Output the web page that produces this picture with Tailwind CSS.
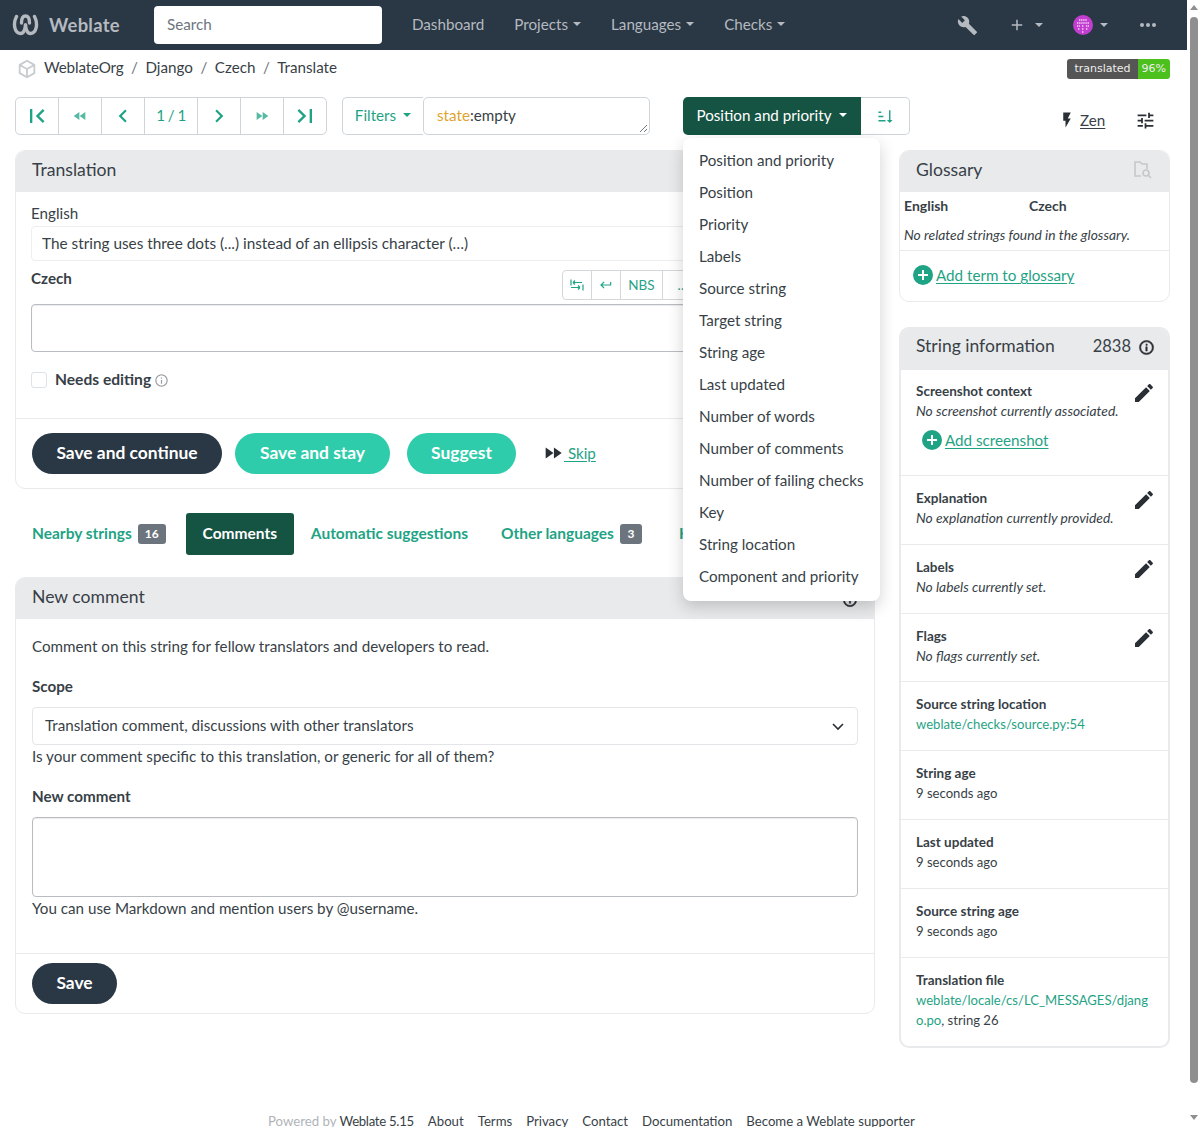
<!DOCTYPE html>
<html lang="en">
<head>
  <meta charset="UTF-8" />
  <title>Translate - Weblate</title>
  <script src="https://cdn.jsdelivr.net/npm/@tailwindcss/browser@4"></script>
</head>
<body class="font-['Lato',sans-serif] text-[15.2px] text-[#383f47] bg-white">
<div class="flex h-[1127px] overflow-hidden">
  <div class="relative w-[1187px] shrink-0">

    <!-- navbar -->
    <nav class="h-[50px] bg-[#2a3744] flex items-center text-[#b5bac0]">
      <svg class="ml-[12px] w-[27px] h-[22px]" viewBox="0 0 27 22" fill="none" stroke="#b5bac0" stroke-linecap="round">
        <path d="M4.5 2.5C1 9 2 19 8.5 19.5C11.5 19.5 13 16 13.5 11" stroke-width="3.4"/>
        <path d="M22.5 2.5C26 9 25 19 18.5 19.5C15.5 19.5 14 16 13.5 11" stroke-width="3.4"/>
        <path d="M9.5 9C9.5 4 11 2 13.5 2C16 2 17.5 4 17.5 9" stroke-width="3.4"/>
      </svg>
      <span class="ml-[10px] mt-[1px] text-[18.4px] font-bold tracking-[.3px]">Weblate</span>
      <div class="ml-[34px] w-[228px] h-[38px] bg-white rounded flex items-center px-[13px] pb-[2px] text-[#6c757d]">Search</div>
      <div class="ml-[30px] pb-[2px] flex items-center gap-[30px]">
        <span>Dashboard</span>
        <span class="flex items-center gap-[5px]">Projects<span class="w-0 h-0 border-x-[4px] border-x-transparent border-t-[4px] border-t-[#b5bac0]"></span></span>
        <span class="flex items-center gap-[5px]">Languages<span class="w-0 h-0 border-x-[4px] border-x-transparent border-t-[4px] border-t-[#b5bac0]"></span></span>
        <span class="flex items-center gap-[5px]">Checks<span class="w-0 h-0 border-x-[4px] border-x-transparent border-t-[4px] border-t-[#b5bac0]"></span></span>
      </div>
      <div class="ml-auto flex items-center mr-[27px]">
        <svg class="w-[21px] h-[21px]" viewBox="0 0 24 24" fill="#b5bac0"><path d="M22.7,19L13.6,9.9C14.5,7.6 14,4.9 12.1,3C10.1,1 7.1,0.6 4.7,1.7L9,6L6,9L1.6,4.7C0.4,7.1 0.9,10.1 2.9,12.1C4.8,14 7.5,14.5 9.8,13.6L18.9,22.7C19.3,23.1 19.9,23.1 20.3,22.7L22.6,20.4C23.1,20 23.1,19.3 22.7,19Z"/></svg>
        <svg class="ml-[30px] w-[18px] h-[18px]" viewBox="0 0 24 24" fill="#b5bac0"><path d="M19,13H13V19H11V13H5V11H11V5H13V11H19V13Z"/></svg>
        <span class="ml-[9px] w-0 h-0 border-x-[4px] border-x-transparent border-t-[4px] border-t-[#b5bac0]"></span>
        <svg class="ml-[30px] w-[20px] h-[20px]" viewBox="0 0 20 20">
          <circle cx="10" cy="10" r="10" fill="#c23ed0"/>
          <path d="M6 5h8M4 8h12M4 11h3M9 11h2M13 11h3M5 14h2M9 14h2M13 14h2M9 17h2" stroke="#f3d3f6" stroke-width="1.4" stroke-dasharray="1.4 .7"/>
        </svg>
        <span class="ml-[7px] w-0 h-0 border-x-[4px] border-x-transparent border-t-[4px] border-t-[#b5bac0]"></span>
        <svg class="ml-[28px] w-[24px] h-[24px]" viewBox="0 0 24 24" fill="#b5bac0"><path d="M16,12A2,2 0 0,1 18,10A2,2 0 0,1 20,12A2,2 0 0,1 18,14A2,2 0 0,1 16,12M10,12A2,2 0 0,1 12,10A2,2 0 0,1 14,12A2,2 0 0,1 12,14A2,2 0 0,1 10,12M4,12A2,2 0 0,1 6,10A2,2 0 0,1 8,12A2,2 0 0,1 6,14A2,2 0 0,1 4,12Z"/></svg>
      </div>
    </nav>

    <!-- breadcrumb -->
    <div class="h-[47px] pl-[16px] pr-[17px] flex items-start">
      <div class="flex items-center h-[35px] text-[15.2px]">
        <svg class="w-[22px] h-[22px] mt-[3px]" viewBox="0 0 24 24" fill="#c9cccf"><path d="M21,16.5C21,16.88 20.79,17.21 20.47,17.38L12.57,21.82C12.41,21.94 12.21,22 12,22C11.79,22 11.59,21.94 11.43,21.82L3.53,17.38C3.21,17.21 3,16.88 3,16.5V7.5C3,7.12 3.21,6.79 3.53,6.62L11.43,2.18C11.59,2.06 11.79,2 12,2C12.21,2 12.41,2.06 12.57,2.18L20.47,6.62C20.79,6.79 21,7.12 21,7.5V16.5M12,4.15L6.04,7.5L12,10.85L17.96,7.5L12,4.15M5,15.91L11,19.29V12.58L5,9.21V15.91M19,15.91V9.21L13,12.58V19.29L19,15.91Z"/></svg>
        <span class="ml-[6px] tracking-[-.15px]">WeblateOrg</span>
        <span class="mx-[7.5px] text-[#6c757d]">/</span><span>Django</span>
        <span class="mx-[7.5px] text-[#6c757d]">/</span><span>Czech</span>
        <span class="mx-[7.5px] text-[#6c757d]">/</span><span>Translate</span>
      </div>
      <div class="ml-auto mt-[9px] flex h-[20px] rounded-[3px] overflow-hidden text-[11px] font-['DejaVu_Sans',sans-serif] leading-[20px] text-[#eee]">
        <span class="bg-[#555] pl-[7px] pr-[7px]">translated</span>
        <span class="bg-[#4cc01c] px-[4px]">96%</span>
      </div>
    </div>

    <!-- toolbar -->
    <div class="pl-[15px] flex h-[38px] items-stretch text-[#1fa385]">
      <div class="flex w-[312px] border border-[#ced4da] rounded-[5px]">
        <span class="w-[42px] flex items-center justify-center"><svg class="w-[28px] h-[28px]" viewBox="0 0 24 24" fill="currentColor"><path d="M18.41,16.59L13.82,12L18.41,7.41L17,6L11,12L17,18L18.41,16.59M6,6H8V18H6V6Z"/></svg></span>
        <span class="w-[43px] border-l border-[#ced4da] flex items-center justify-center"><svg class="w-[16px] h-[16px] opacity-75" viewBox="0 0 24 24" fill="currentColor"><path d="M11.5,12L20,18V6M11,18V6L2.5,12L11,18Z"/></svg></span>
        <span class="w-[43px] border-l border-[#ced4da] flex items-center justify-center"><svg class="w-[26px] h-[26px]" viewBox="0 0 24 24" fill="currentColor"><path d="M15.41,16.58L10.83,12L15.41,7.41L14,6L8,12L14,18L15.41,16.58Z"/></svg></span>
        <span class="w-[53px] border-l border-[#ced4da] flex items-center justify-center pb-[2px] tracking-[-.6px]">1 / 1</span>
        <span class="w-[43px] border-l border-[#ced4da] flex items-center justify-center"><svg class="w-[26px] h-[26px]" viewBox="0 0 24 24" fill="currentColor"><path d="M8.59,16.58L13.17,12L8.59,7.41L10,6L16,12L10,18L8.59,16.58Z"/></svg></span>
        <span class="w-[43px] border-l border-[#ced4da] flex items-center justify-center"><svg class="w-[16px] h-[16px] opacity-75" viewBox="0 0 24 24" fill="currentColor"><path d="M13,6V18L21.5,12M4,18L12.5,12L4,6V18Z"/></svg></span>
        <span class="flex-1 border-l border-[#ced4da] flex items-center justify-center"><svg class="w-[28px] h-[28px]" viewBox="0 0 24 24" fill="currentColor"><path d="M5.59,7.41L10.18,12L5.59,16.59L7,18L13,12L7,6L5.59,7.41M16,6H18V18H16V6Z"/></svg></span>
      </div>
      <div class="ml-[15px] w-[81px] border border-r-0 border-[#ced4da] rounded-l-[5px] flex items-center justify-center gap-[7px] pb-[2px]">Filters<span class="w-0 h-0 border-x-[4px] border-x-transparent border-t-[4px] border-t-[#1fa385]"></span></div>
      <div class="relative w-[227px] border border-[#ced4da] rounded-[5px] px-[13px] pt-[6px] text-[#383f47]"><span class="text-[#e0a32e]">state</span>:empty
        <svg class="absolute right-[1px] bottom-[1px] w-[9px] h-[9px]" viewBox="0 0 9 9" stroke="#777" fill="none"><path d="M1 8L8 1M5 8L8 5"/></svg>
      </div>
      <div class="ml-[33px] w-[178px] bg-[#155443] rounded-l-[5px] text-white flex items-center justify-center gap-[7px] pb-[2px] pr-[1px]">Position and priority<span class="w-0 h-0 border-x-[4px] border-x-transparent border-t-[4px] border-t-white"></span></div>
      <div class="w-[49px] border border-l-0 border-[#ced4da] rounded-r-[5px] flex items-center justify-center"><svg class="w-[17px] h-[17px]" viewBox="0 0 24 24" fill="currentColor"><path d="M19 17H22L18 21L14 17H17V3H19M2 17H12V19H2M6 5V7H2V5M2 11H9V13H2V11Z"/></svg></div>
      <div class="ml-[148px] flex items-center text-[#383f47] mt-[8px]">
        <svg class="w-[18px] h-[18px]" viewBox="0 0 24 24" fill="#2a2f35"><path d="M7,2V13H10V22L17,10H13L17,2H7Z"/></svg>
        <span class="ml-[4px] underline underline-offset-2">Zen</span>
      </div>
      <svg class="ml-[30px] mt-[13px] w-[21px] h-[21px]" viewBox="0 0 24 24" fill="#2a2f35"><path d="M3,17V19H9V17H3M3,5V7H13V5H3M13,21V19H21V17H13V15H11V21H13M7,9V11H3V13H7V15H9V9H7M21,13V11H11V13H21M15,9H17V7H21V5H17V3H15V9Z"/></svg>
    </div>

    <div class="pl-[15px] pt-[15px] flex gap-[24px] items-start">
      <!-- left column -->
      <div class="w-[860px] shrink-0">
        <section class="border border-[#e9eaec] rounded-[10px] overflow-hidden">
          <div class="h-[41px] bg-[#e9eaec] px-[16px] flex items-center text-[17.6px]"><span class="pb-[3px]">Translation</span></div>
          <div class="pl-[15px] pr-[16px] pt-[11px] h-[226px]">
            <div class="leading-[20px]">English</div>
            <div class="mt-[3px] h-[35px] border border-[#eceef0] rounded-[4px] px-[10px] flex items-center text-[15.35px]">The string uses three dots (...) instead of an ellipsis character (…)</div>
            <div class="flex justify-between h-[43px]">
              <b class="mt-[7px] font-bold leading-[20px]">Czech</b>
              <div class="mt-[9px] h-[30px] mr-[155px] flex border border-[#d5d8db] rounded-[4px] text-[#1fa385] text-[13.5px]">
                <span class="w-[28px] flex items-center justify-center"><svg class="w-[14px] h-[14px]" viewBox="0 0 14 14" fill="none" stroke="currentColor" stroke-width="1.2"><path d="M1 1.5v6M13 6.5v6M3 4.5h9M3 4.5l2-2M3 4.5l2 2M1 9.5h9M10 9.5l-2-2M10 9.5l-2 2"/></svg></span>
                <span class="w-[29px] border-l border-[#d5d8db] flex items-center justify-center"><svg class="w-[14px] h-[14px]" viewBox="0 0 24 24" fill="currentColor"><path d="M19,7V11H5.83L9.41,7.41L8,6L2,12L8,18L9.41,16.58L5.83,13H21V7H19Z"/></svg></span>
                <span class="w-[42px] border-l border-[#d5d8db] flex items-center justify-center">NBS</span>
                <span class="w-[40px] border-l border-[#d5d8db] flex items-center justify-center">…</span>
              </div>
            </div>
            <div class="h-[48px] border border-[#b9bdc2] rounded-[4px] shadow-[inset_0_1px_1px_rgba(0,0,0,.08)]"></div>
            <div class="mt-[18px] flex items-center h-[20px]">
              <span class="w-[16px] h-[16px] border border-[#dee2e6] rounded-[3px]"></span>
              <b class="ml-[8px] font-bold text-[15.6px]">Needs editing</b>
              <svg class="ml-[3px] w-[15px] h-[15px]" viewBox="0 0 24 24" fill="#9aa0a6"><path d="M11,9H13V7H11M12,20C7.59,20 4,16.41 4,12C4,7.59 7.59,4 12,4C16.41,4 20,7.59 20,12C20,16.41 16.41,20 12,20M12,2A10,10 0 0,0 2,12A10,10 0 0,0 12,22A10,10 0 0,0 22,12A10,10 0 0,0 12,2M11,17H13V11H11V17Z"/></svg>
            </div>
          </div>
          <div class="border-t border-[#e9eaec] h-[70px] pl-[16px] pt-[14px] flex items-start text-white text-[17.4px] font-bold">
            <span class="w-[190px] h-[41px] bg-[#2a3744] rounded-full flex items-center justify-center">Save and continue</span>
            <span class="ml-[13px] w-[155px] h-[41px] bg-[#2eccaa] rounded-full flex items-center justify-center">Save and stay</span>
            <span class="ml-[17px] w-[109px] h-[41px] bg-[#2eccaa] rounded-full flex items-center justify-center">Suggest</span>
            <span class="ml-[26px] h-[41px] pb-[1px] flex items-center text-[#1fa385] text-[15.2px] font-normal">
              <svg class="w-[22px] h-[22px]" viewBox="0 0 24 24" fill="#2a2f35"><path d="M13,6V18L21.5,12M4,18L12.5,12L4,6V18Z"/></svg>
              <span class="underline underline-offset-2 whitespace-pre"> Skip</span>
            </span>
          </div>
        </section>

        <div class="mt-[24px] h-[42px] flex items-center pl-[17px] text-[#1fa385] font-bold text-[15.5px] whitespace-nowrap overflow-hidden">
          <span>Nearby strings</span>
          <span class="ml-[6px] w-[28px] h-[20px] bg-[#6c757d] rounded-[3px] text-white text-[12px] font-bold flex items-center justify-center">16</span>
          <span class="ml-[20px] w-[108px] h-[42px] bg-[#155443] rounded-[3px] text-white flex items-center justify-center">Comments</span>
          <span class="ml-[17px]">Automatic suggestions</span>
          <span class="ml-[33px]">Other languages</span>
          <span class="ml-[6px] w-[22px] h-[20px] bg-[#6c757d] rounded-[3px] text-white text-[12px] font-bold flex items-center justify-center">3</span>
          <span class="ml-[37px]">History</span>
        </div>

        <section class="mt-[22px] border border-[#e9eaec] rounded-[10px] overflow-hidden">
          <div class="h-[41px] bg-[#e9eaec] px-[16px] flex items-center justify-between text-[17.6px]"><span class="pb-[2px]">New comment</span>
            <svg class="w-[16px] h-[16px] mt-[2px]" viewBox="0 0 24 24" fill="#2a2f35" stroke="#2a2f35" stroke-width=".8"><path d="M11,9H13V7H11M12,20C7.59,20 4,16.41 4,12C4,7.59 7.59,4 12,4C16.41,4 20,7.59 20,12C20,16.41 16.41,20 12,20M12,2A10,10 0 0,0 2,12A10,10 0 0,0 12,22A10,10 0 0,0 22,12A10,10 0 0,0 12,2M11,17H13V11H11V17Z"/></svg>
          </div>
          <div class="px-[16px] pt-[17px] h-[334px] leading-[20px]">
            <p>Comment on this string for fellow translators and developers to read.</p>
            <b class="block mt-[20px] font-bold">Scope</b>
            <div class="mt-[11px] h-[38px] border border-[#e3e5e8] rounded-[4px] px-[12px] pb-[2px] flex items-center justify-between">Translation comment, discussions with other translators
              <svg class="w-[14px] h-[14px] mt-[2px]" viewBox="0 0 14 14" fill="none" stroke="#2a2f35" stroke-width="1.6"><path d="M2 5l5 5 5-5"/></svg>
            </div>
            <p class="mt-[1px]">Is your comment specific to this translation, or generic for all of them?</p>
            <b class="block mt-[20px] font-bold">New comment</b>
            <div class="mt-[11px] h-[80px] border border-[#b9bdc2] rounded-[4px] shadow-[inset_0_1px_1px_rgba(0,0,0,.08)]"></div>
            <p class="mt-[1px]">You can use Markdown and mention users by @username.</p>
          </div>
          <div class="border-t border-[#e9eaec] h-[60px] pl-[16px] pt-[9px]">
            <span class="w-[85px] h-[41px] bg-[#2a3744] rounded-full text-white text-[17.4px] font-bold flex items-center justify-center">Save</span>
          </div>
        </section>
      </div>

      <!-- right column -->
      <div class="w-[271px] shrink-0">
        <section class="border border-[#e9eaec] rounded-[10px] overflow-hidden h-[152px]">
          <div class="h-[41px] bg-[#e9eaec] px-[16px] flex items-center justify-between text-[17.6px]"><span class="pb-[3px]">Glossary</span>
            <svg class="w-[20px] h-[20px] -mt-[3px]" viewBox="0 0 20 20" fill="none" stroke="#c5c8cc" stroke-width="1.6"><path d="M8 16H2V2h5l2 2h5v5"/><circle cx="13" cy="13" r="3"/><path d="M15 15l3 3"/></svg>
          </div>
          <div class="flex px-[4px] pt-[4px] text-[14px] font-bold leading-[20px]"><span class="w-[125px]">English</span><span>Czech</span></div>
          <div class="px-[4px] mt-[9px] pb-[5px] border-b border-[#e9eaec] italic text-[13.85px] leading-[20px]">No related strings found in the glossary.</div>
          <div class="pl-[13px] pt-[13px] flex items-center text-[#1fa385]">
            <svg class="w-[20px] h-[20px] mr-[3px]" viewBox="2 2 20 20" fill="#1fa385"><path d="M17,13H13V17H11V13H7V11H11V7H13V11H17M12,2A10,10 0 0,0 2,12A10,10 0 0,0 12,22A10,10 0 0,0 22,12A10,10 0 0,0 12,2Z"/></svg>
            <span class="underline underline-offset-2">Add term to glossary</span>
          </div>
        </section>

        <section class="mt-[25px] border-2 border-[#e9eaec] rounded-[10px] overflow-hidden h-[721px] text-[13.1px] leading-[20px]">
          <div class="h-[41px] bg-[#e9eaec] pl-[15px] pr-[13px] flex items-center text-[17.5px]"><span class="pb-[7px]">String information</span>
            <span class="ml-auto text-[16.5px] pb-[7px]">2838</span>
            <svg class="ml-[7px] mb-[4px] w-[17px] h-[17px]" viewBox="0 0 24 24" fill="#2a2f35" stroke="#2a2f35" stroke-width=".8"><path d="M11,9H13V7H11M12,20C7.59,20 4,16.41 4,12C4,7.59 7.59,4 12,4C16.41,4 20,7.59 20,12C20,16.41 16.41,20 12,20M12,2A10,10 0 0,0 2,12A10,10 0 0,0 12,22A10,10 0 0,0 22,12A10,10 0 0,0 12,2M11,17H13V11H11V17Z"/></svg>
          </div>
          <div class="relative h-[106px] border-b border-[#e9eaec] pl-[15px] pt-[11px]">
            <b class="block font-bold text-[13.5px]">Screenshot context</b>
            <i class="text-[13.8px]">No screenshot currently associated.</i>
            <div class="ml-[6px] mt-[9px] flex items-center text-[#1fa385] text-[15.2px]">
              <svg class="w-[20px] h-[20px] mr-[3px]" viewBox="2 2 20 20" fill="#1fa385"><path d="M17,13H13V17H11V13H7V11H11V7H13V11H17M12,2A10,10 0 0,0 2,12A10,10 0 0,0 12,22A10,10 0 0,0 22,12A10,10 0 0,0 12,2Z"/></svg>
              <span class="underline underline-offset-2">Add screenshot</span>
            </div>
            <svg class="absolute right-[12px] top-[11px] w-[24px] h-[24px]" viewBox="0 0 24 24" fill="#2a2f35"><path d="M20.71,7.04C21.1,6.65 21.1,6 20.71,5.63L18.37,3.29C18,2.9 17.35,2.9 16.96,3.29L15.12,5.12L18.87,8.87M3,17.25V21H6.75L17.81,9.93L14.06,6.18L3,17.25Z"/></svg>
          </div>
          <div class="relative h-[69px] border-b border-[#e9eaec] pl-[15px] pt-[12px]">
            <b class="block font-bold text-[13.5px]">Explanation</b><i class="text-[13.8px]">No explanation currently provided.</i>
            <svg class="absolute right-[12px] top-[12px] w-[24px] h-[24px]" viewBox="0 0 24 24" fill="#2a2f35"><path d="M20.71,7.04C21.1,6.65 21.1,6 20.71,5.63L18.37,3.29C18,2.9 17.35,2.9 16.96,3.29L15.12,5.12L18.87,8.87M3,17.25V21H6.75L17.81,9.93L14.06,6.18L3,17.25Z"/></svg>
          </div>
          <div class="relative h-[69px] border-b border-[#e9eaec] pl-[15px] pt-[12px]">
            <b class="block font-bold text-[13.5px]">Labels</b><i class="text-[13.8px]">No labels currently set.</i>
            <svg class="absolute right-[12px] top-[12px] w-[24px] h-[24px]" viewBox="0 0 24 24" fill="#2a2f35"><path d="M20.71,7.04C21.1,6.65 21.1,6 20.71,5.63L18.37,3.29C18,2.9 17.35,2.9 16.96,3.29L15.12,5.12L18.87,8.87M3,17.25V21H6.75L17.81,9.93L14.06,6.18L3,17.25Z"/></svg>
          </div>
          <div class="relative h-[68px] border-b border-[#e9eaec] pl-[15px] pt-[12px]">
            <b class="block font-bold text-[13.5px]">Flags</b><i class="text-[13.8px]">No flags currently set.</i>
            <svg class="absolute right-[12px] top-[12px] w-[24px] h-[24px]" viewBox="0 0 24 24" fill="#2a2f35"><path d="M20.71,7.04C21.1,6.65 21.1,6 20.71,5.63L18.37,3.29C18,2.9 17.35,2.9 16.96,3.29L15.12,5.12L18.87,8.87M3,17.25V21H6.75L17.81,9.93L14.06,6.18L3,17.25Z"/></svg>
          </div>
          <div class="h-[69px] border-b border-[#e9eaec] pl-[15px] pt-[12px]">
            <b class="block font-bold text-[13.5px]">Source string location</b><span class="text-[#1fa385]">weblate/checks/source.py:54</span>
          </div>
          <div class="h-[69px] border-b border-[#e9eaec] pl-[15px] pt-[12px]">
            <b class="block font-bold text-[13.5px]">String age</b>9 seconds ago
          </div>
          <div class="h-[69px] border-b border-[#e9eaec] pl-[15px] pt-[12px]">
            <b class="block font-bold text-[13.5px]">Last updated</b>9 seconds ago
          </div>
          <div class="h-[69px] border-b border-[#e9eaec] pl-[15px] pt-[12px]">
            <b class="block font-bold text-[13.5px]">Source string age</b>9 seconds ago
          </div>
          <div class="pl-[15px] pr-[16px] pt-[12px] break-all">
            <b class="block font-bold text-[13.5px]">Translation file</b><span class="text-[#1fa385]">weblate/locale/cs/LC_MESSAGES/django.po</span>, string 26
          </div>
        </section>
      </div>
    </div>

    <!-- footer -->
    <footer class="mt-[63px] pl-[268px] flex gap-[14px] text-[13.2px] leading-[20px] whitespace-nowrap">
      <span><span class="text-[#b0b4b8]">Powered by</span> <span class="tracking-[-.3px]">Weblate 5.15</span></span>
      <span>About</span><span>Terms</span><span>Privacy</span><span>Contact</span><span>Documentation</span><span>Become a Weblate supporter</span>
    </footer>

    <!-- open sort menu -->
    <div class="absolute left-[683px] top-[138px] w-[197px] h-[463px] bg-white rounded-[8px] shadow-[0_6px_16px_rgba(0,0,0,.18)] py-[7px]">
      <div class="h-[32px] pl-[16px] pb-[2px] flex items-center">Position and priority</div>
      <div class="h-[32px] pl-[16px] pb-[2px] flex items-center">Position</div>
      <div class="h-[32px] pl-[16px] pb-[2px] flex items-center">Priority</div>
      <div class="h-[32px] pl-[16px] pb-[2px] flex items-center">Labels</div>
      <div class="h-[32px] pl-[16px] pb-[2px] flex items-center">Source string</div>
      <div class="h-[32px] pl-[16px] pb-[2px] flex items-center">Target string</div>
      <div class="h-[32px] pl-[16px] pb-[2px] flex items-center">String age</div>
      <div class="h-[32px] pl-[16px] pb-[2px] flex items-center">Last updated</div>
      <div class="h-[32px] pl-[16px] pb-[2px] flex items-center">Number of words</div>
      <div class="h-[32px] pl-[16px] pb-[2px] flex items-center">Number of comments</div>
      <div class="h-[32px] pl-[16px] pb-[2px] flex items-center">Number of failing checks</div>
      <div class="h-[32px] pl-[16px] pb-[2px] flex items-center">Key</div>
      <div class="h-[32px] pl-[16px] pb-[2px] flex items-center">String location</div>
      <div class="h-[32px] pl-[16px] pb-[2px] flex items-center">Component and priority</div>
    </div>
  </div>

  <!-- scrollbar -->
  <div class="w-[13px] shrink-0 bg-white flex flex-col items-center">
    <span class="mt-[5px] w-0 h-0 border-x-[4px] border-x-transparent border-b-[5px] border-b-[#8f8f8f]"></span>
    <span class="mt-[7px] w-[8px] h-[1066px] rounded-full bg-[#8f8f8f]"></span>
    <span class="mt-[32px] w-0 h-0 border-x-[4px] border-x-transparent border-t-[5px] border-t-[#8f8f8f]"></span>
  </div>
</div>
</body>
</html>
